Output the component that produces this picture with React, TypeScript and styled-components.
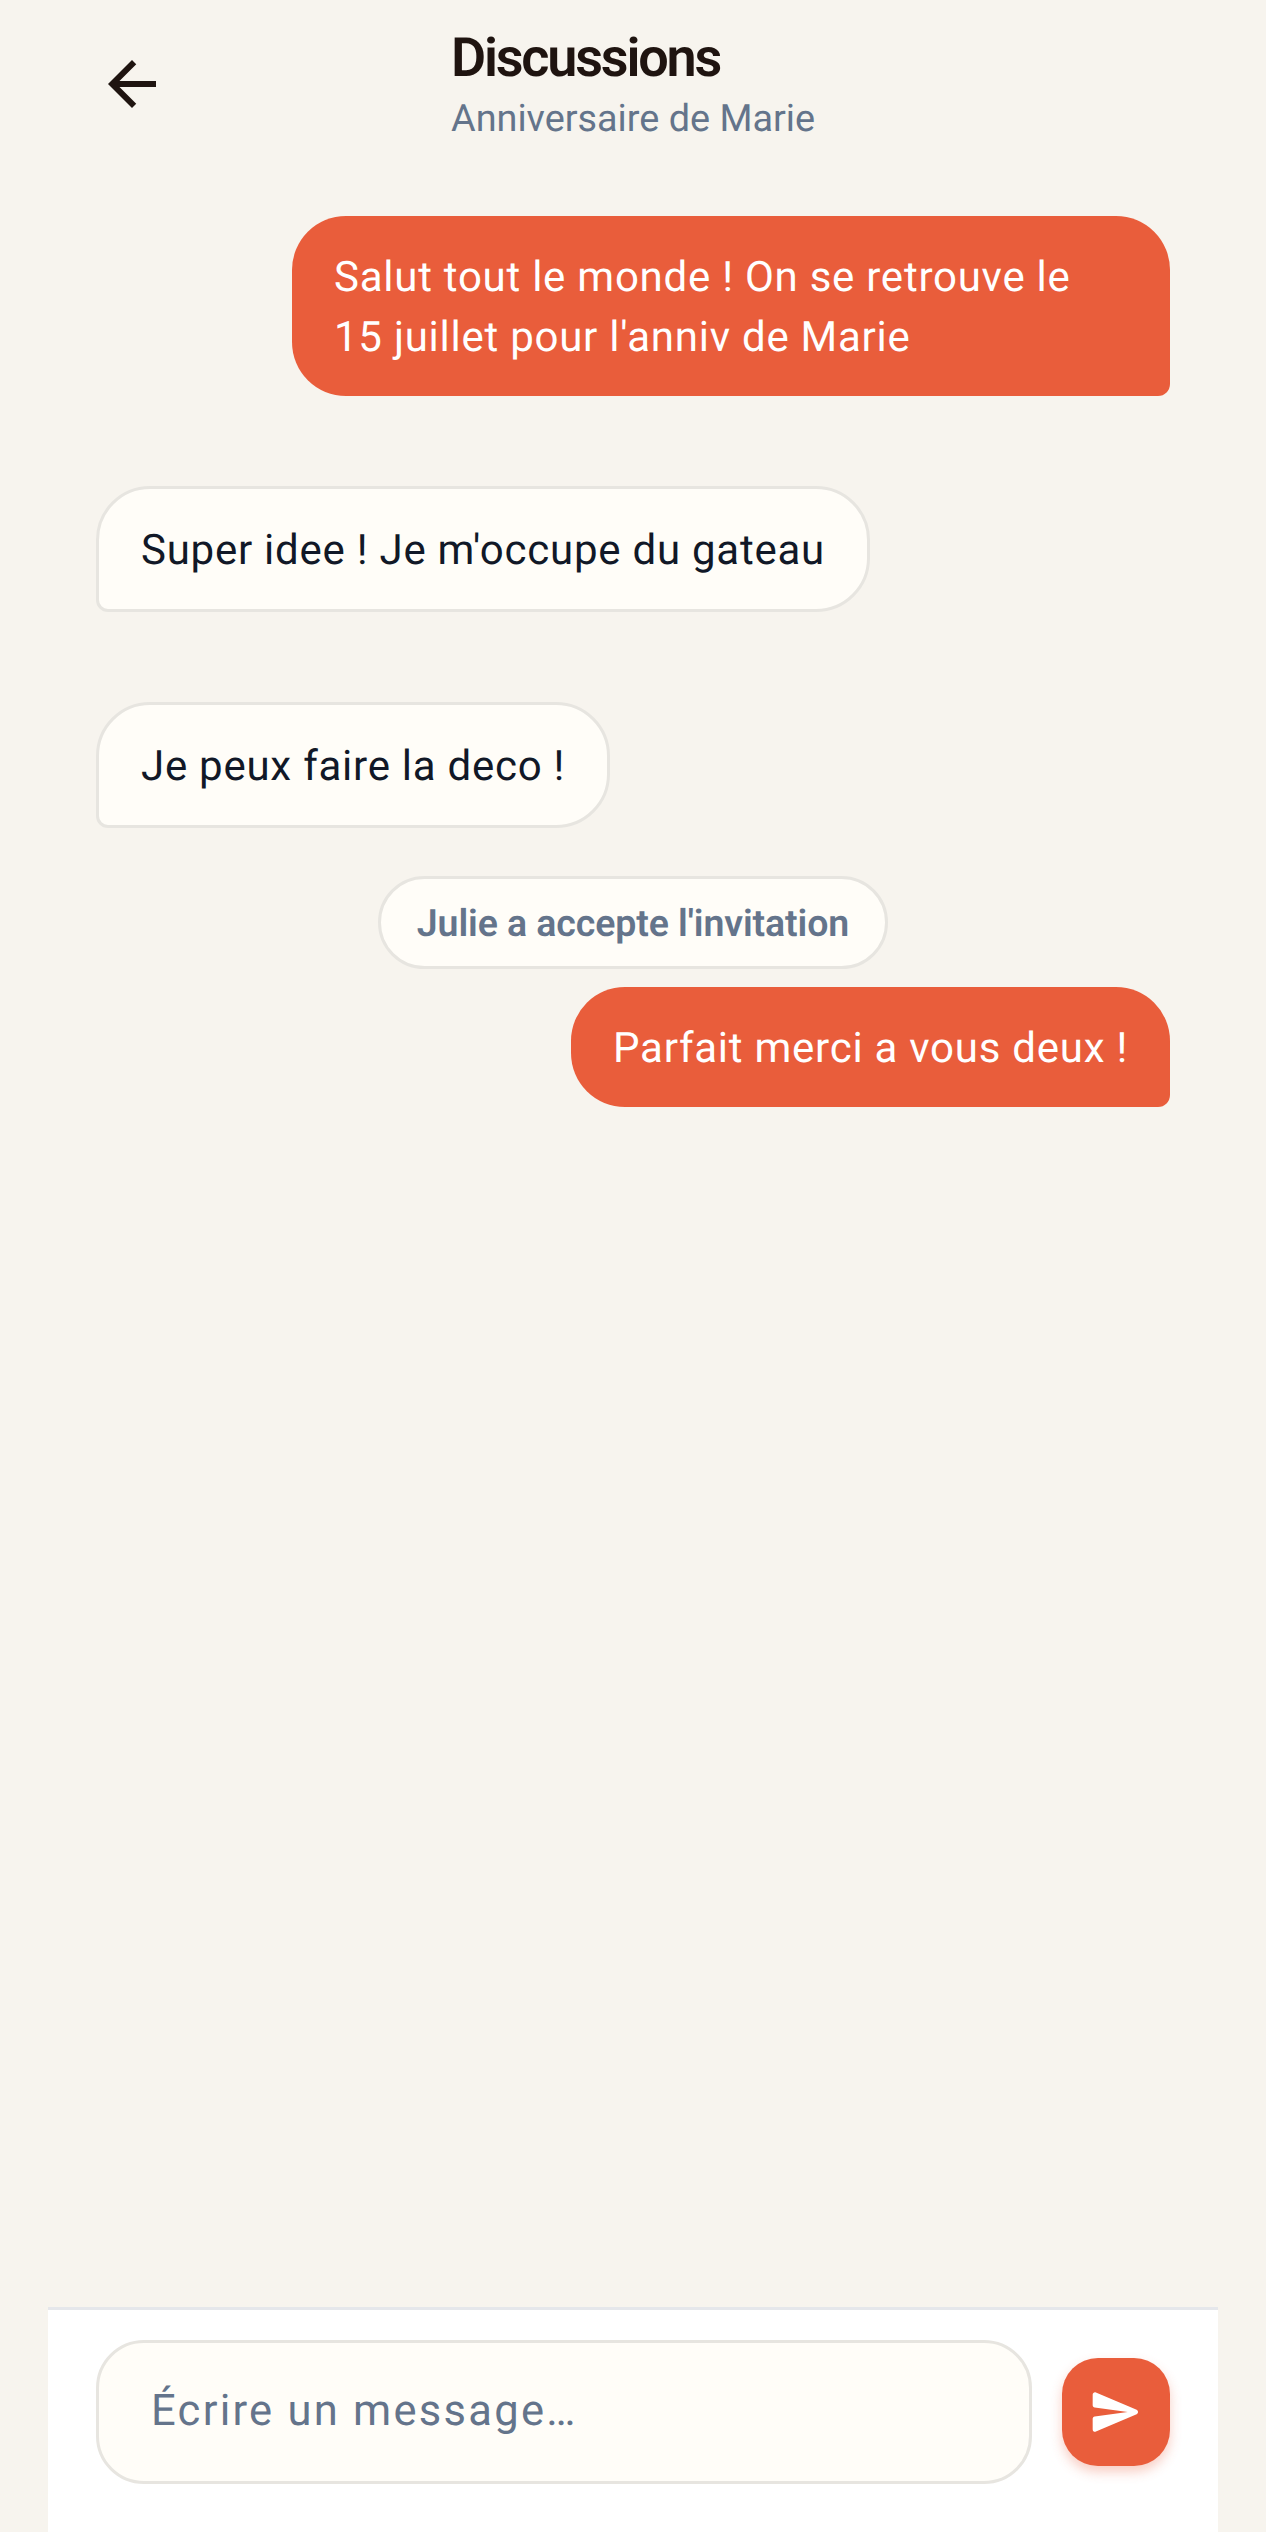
import styled, { createGlobalStyle } from "styled-components";
import { MdArrowBack } from "react-icons/md";

const GlobalStyle = createGlobalStyle`
  html, body {
    margin: 0;
    padding: 0;
    background: #f7f4ee;
  }
  * {
    box-sizing: border-box;
  }
`;

const Screen = styled.div`
  height: 100vh;
  display: flex;
  flex-direction: column;
  overflow: hidden;
  background: #f7f4ee;
  font-family: Roboto, "Liberation Sans", sans-serif;
  text-rendering: geometricPrecision;
`;

const Header = styled.header`
  flex: none;
  height: 168px;
  display: grid;
  grid-template-columns: 1fr auto 1fr;
  align-items: start;
  padding: 0 96px;
`;

const BackButton = styled.div`
  display: flex;
  margin-top: 48px;
  color: #1f1410;
  font-size: 72px;
`;

const TitleBlock = styled.div`
  display: flex;
  flex-direction: column;
  padding-top: 26px;
`;

const Title = styled.h1`
  margin: 0;
  font-size: 54px;
  line-height: 66px;
  font-weight: 600;
  letter-spacing: -2.2px;
  color: #1f1410;
`;

const Subtitle = styled.div`
  font-size: 37.8px;
  line-height: 54px;
  color: #64748b;
`;

const Messages = styled.main`
  flex: 1;
  display: flex;
  flex-direction: column;
  padding: 48px 96px 0;
`;

const Bubble = styled.div<{ $mine?: boolean; $gap: number }>`
  align-self: ${(p) => (p.$mine ? "flex-end" : "flex-start")};
  max-width: 878px;
  margin-bottom: ${(p) => p.$gap}px;
  padding: 31.5px 42px 28.5px;
  font-size: 42px;
  line-height: 60px;
  letter-spacing: 0.75px;
  background: ${(p) => (p.$mine ? "#e95d3b" : "#fffdf8")};
  color: ${(p) => (p.$mine ? "#ffffff" : "#111827")};
  border: ${(p) => (p.$mine ? "none" : "3px solid #e7e5e0")};
  border-radius: ${(p) => (p.$mine ? "54px 54px 12px 54px" : "54px 54px 54px 12px")};
`;

const SystemChip = styled.div`
  align-self: center;
  margin-bottom: 18px;
  padding: 20px 36px 16px;
  font-size: 37.5px;
  line-height: 51px;
  font-weight: 600;
  letter-spacing: -0.1px;
  color: #64748b;
  background: #fffdf8;
  border: 3px solid #e7e5e0;
  border-radius: 48px;
`;

const Composer = styled.footer`
  flex: none;
  margin: 0 48px;
  display: flex;
  align-items: center;
  gap: 30px;
  padding: 30px 48px 48px;
  background: #ffffff;
  border-top: 3px solid #e5e7eb;
`;

const MessageInput = styled.input`
  flex: 1;
  min-width: 0;
  height: 144px;
  padding: 0 51px 3px 52px;
  font-family: Roboto, "Liberation Sans", sans-serif;
  font-size: 43.5px;
  letter-spacing: 2.27px;
  text-rendering: geometricPrecision;
  background: #fffdf8;
  border: 3px solid #e7e5e0;
  border-radius: 48px;
  outline: none;

  &::placeholder {
    color: #64748b;
    opacity: 1;
  }
`;

const SendButton = styled.button`
  flex: none;
  width: 108px;
  height: 108px;
  display: flex;
  align-items: center;
  justify-content: center;
  padding: 0;
  border: none;
  border-radius: 36px;
  background: #e95d3b;
  box-shadow: 0 6px 12px rgba(233, 93, 59, 0.3);
`;

function SendIcon() {
  return (
    <svg width="56" height="56" viewBox="0 0 24 24" fill="#ffffff">
      <path d="M3.4 20.4l17.45-7.48c.81-.35.81-1.49 0-1.84L3.4 3.6c-.66-.29-1.39.2-1.39.91L2 9.12c0 .5.37.93.87.99L17 12 2.87 13.88c-.5.07-.87.5-.87 1l.01 4.61c0 .71.73 1.2 1.39.91z" />
    </svg>
  );
}

export default function App() {
  return (
    <Screen>
      <GlobalStyle />
      <Header>
        <BackButton>
          <MdArrowBack />
        </BackButton>
        <TitleBlock>
          <Title>Discussions</Title>
          <Subtitle>Anniversaire de Marie</Subtitle>
        </TitleBlock>
      </Header>
      <Messages>
        <Bubble $mine $gap={90}>
          Salut tout le monde ! On se retrouve le 15 juillet pour l'anniv de Marie
        </Bubble>
        <Bubble $gap={90}>Super idee ! Je m'occupe du gateau</Bubble>
        <Bubble $gap={48}>Je peux faire la deco !</Bubble>
        <SystemChip>Julie a accepte l'invitation</SystemChip>
        <Bubble $mine $gap={0}>
          Parfait merci a vous deux !
        </Bubble>
      </Messages>
      <Composer>
        <MessageInput placeholder="Écrire un message…" />
        <SendButton>
          <SendIcon />
        </SendButton>
      </Composer>
    </Screen>
  );
}
